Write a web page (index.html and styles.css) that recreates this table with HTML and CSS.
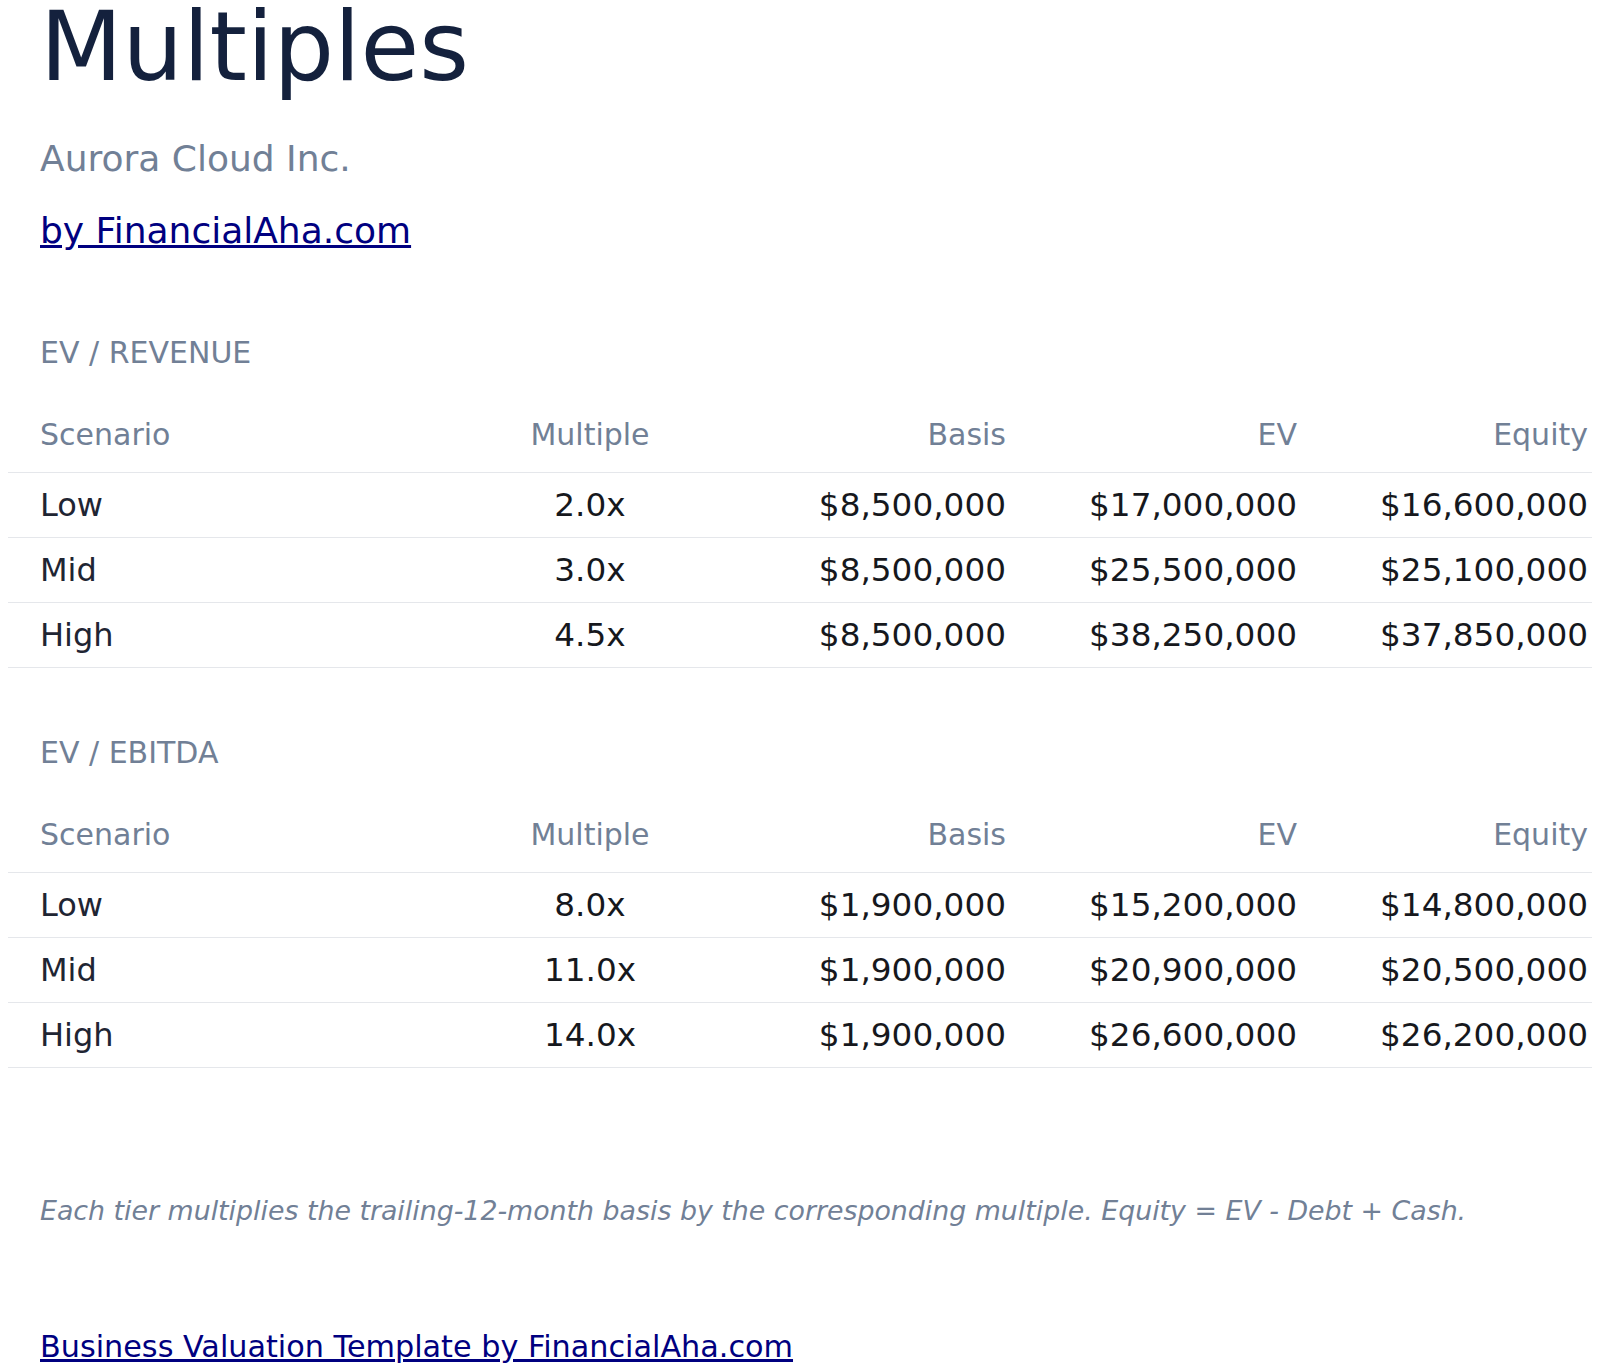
FILE: index.html
```html
<!DOCTYPE html>
<html lang="en">
<head>
<meta charset="utf-8">
<title>Multiples</title>
<link rel="stylesheet" href="styles.css">
</head>
<body>
<main class="page">
  <header class="intro">
    <h1 class="title">Multiples</h1>
    <p class="company">Aurora Cloud Inc.</p>
    <p class="byline"><a href="#">by FinancialAha.com</a></p>
  </header>

  <section class="block block-first">
    <h2 class="label">EV / REVENUE</h2>
    <table class="grid">
      <colgroup>
        <col class="c-scen"><col class="c-mult"><col class="c-num"><col class="c-num"><col class="c-num">
      </colgroup>
      <thead>
        <tr><th class="name">Scenario</th><th class="mult">Multiple</th><th class="num">Basis</th><th class="num">EV</th><th class="num">Equity</th></tr>
      </thead>
      <tbody>
        <tr><td class="name">Low</td><td class="mult">2.0x</td><td class="num">$8,500,000</td><td class="num">$17,000,000</td><td class="num">$16,600,000</td></tr>
        <tr><td class="name">Mid</td><td class="mult">3.0x</td><td class="num">$8,500,000</td><td class="num">$25,500,000</td><td class="num">$25,100,000</td></tr>
        <tr><td class="name">High</td><td class="mult">4.5x</td><td class="num">$8,500,000</td><td class="num">$38,250,000</td><td class="num">$37,850,000</td></tr>
      </tbody>
    </table>
  </section>

  <section class="block block-second">
    <h2 class="label">EV / EBITDA</h2>
    <table class="grid">
      <colgroup>
        <col class="c-scen"><col class="c-mult"><col class="c-num"><col class="c-num"><col class="c-num">
      </colgroup>
      <thead>
        <tr><th class="name">Scenario</th><th class="mult">Multiple</th><th class="num">Basis</th><th class="num">EV</th><th class="num">Equity</th></tr>
      </thead>
      <tbody>
        <tr><td class="name">Low</td><td class="mult">8.0x</td><td class="num">$1,900,000</td><td class="num">$15,200,000</td><td class="num">$14,800,000</td></tr>
        <tr><td class="name">Mid</td><td class="mult">11.0x</td><td class="num">$1,900,000</td><td class="num">$20,900,000</td><td class="num">$20,500,000</td></tr>
        <tr><td class="name">High</td><td class="mult">14.0x</td><td class="num">$1,900,000</td><td class="num">$26,600,000</td><td class="num">$26,200,000</td></tr>
      </tbody>
    </table>
  </section>

  <p class="note">Each tier multiplies the trailing-12-month basis by the corresponding multiple. Equity = EV - Debt + Cash.</p>

  <footer class="foot"><a href="#">Business Valuation Template by FinancialAha.com</a></footer>
</main>
</body>
</html>
```

FILE: styles.css
```css
html, body {
  margin: 0;
  padding: 0;
  background: #ffffff;
}

body {
  font-family: "DejaVu Sans", "Liberation Sans", sans-serif;
  color: #1f2533;
}

.page {
  padding: 0 8px;
}

.intro,
.label,
.note,
.foot {
  padding-left: 32px;
}

.title {
  margin: 0;
  font-size: 95.5px;
  line-height: 94px;
  font-weight: normal;
  color: #14213d;
}

.company {
  margin: 38px 0 0;
  font-size: 36px;
  line-height: 54px;
  color: #718096;
}

.byline {
  margin: 18px 0 0;
  font-size: 36px;
  line-height: 54px;
}

.byline a,
.foot a {
  color: #000080;
  text-decoration: underline;
}

.block-first {
  margin-top: 72px;
}

.block-second {
  margin-top: 62px;
}

.label {
  margin: 0 0 21px;
  font-size: 30px;
  line-height: 45px;
  font-weight: normal;
  color: #718096;
}

.grid {
  width: 100%;
  border-collapse: collapse;
  table-layout: fixed;
}

.c-scen { width: 453px; }
.c-mult { width: 258px; }
.c-num { width: 291px; }

.grid th {
  padding: 16px 4px 15px;
  font-size: 30px;
  line-height: 45px;
  font-weight: normal;
  color: #718096;
  border-bottom: 1px solid #e5e7eb;
}

.grid td {
  padding: 8px 4px;
  font-size: 32px;
  line-height: 48px;
  color: #16181d;
  border-bottom: 1px solid #e5e7eb;
  white-space: nowrap;
}

.grid td.num,
.grid td.mult {
  font-size: 32.7px;
}

.grid .name {
  text-align: left;
  padding-left: 32px;
}

.grid td.name {
  color: #1f2533;
}

.grid .mult {
  text-align: center;
}

.grid .num {
  text-align: right;
}

.note {
  margin: 123px 0 0;
  font-size: 26.8px;
  line-height: 40px;
  font-style: italic;
  color: #718096;
}

.foot {
  margin-top: 93px;
  font-size: 30.25px;
  line-height: 45px;
}
```
